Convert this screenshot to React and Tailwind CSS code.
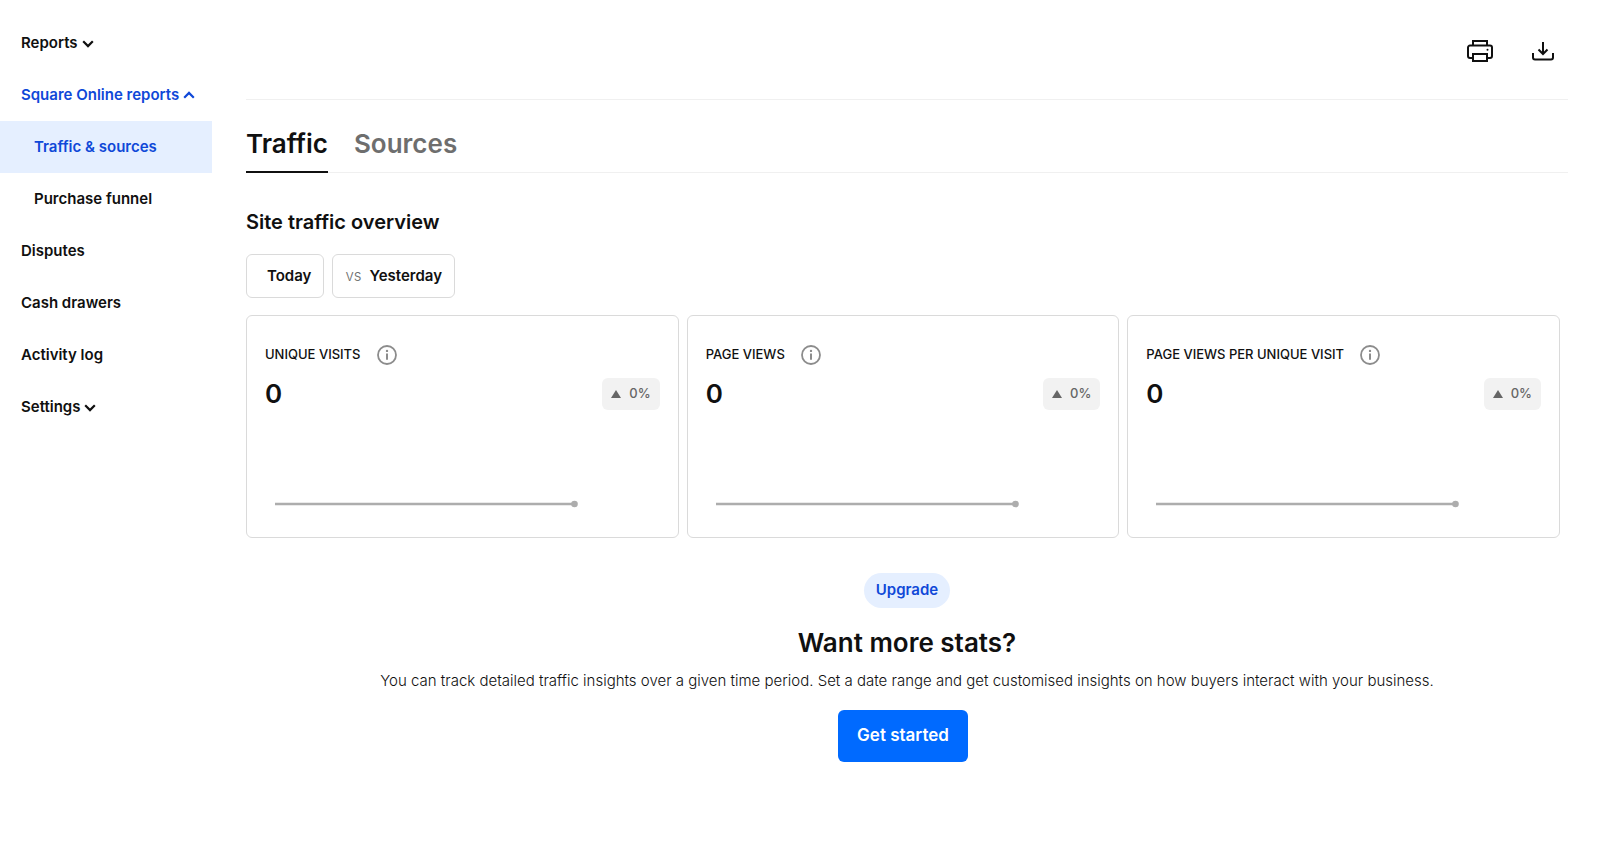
import { useState } from "react";

const stats = [
  { label: "UNIQUE VISITS", value: 0, change: "0%" },
  { label: "PAGE VIEWS", value: 0, change: "0%" },
  { label: "PAGE VIEWS PER UNIQUE VISIT", value: 0, change: "0%" },
];

const Chevron = ({ up }) => (
  <svg className="w-3 h-3" viewBox="0 0 12 12" fill="none" stroke="currentColor" strokeWidth="2.2">
    <path d={up ? "M1.2 8.7 6 3.9l4.800 4.800" : "M1.2 4.3 6 9.100l4.800-4.800"} />
  </svg>
);

const PrintIcon = () => (
  <svg className="w-7 h-6" viewBox="0 0 28 24" fill="none" stroke="currentColor" strokeWidth="2">
    <path d="M7 6.5V2h14v4.500" />
    <path d="M7 19H4a2 2 0 0 1-2-2V8.500a2 2 0 0 1 2-2h20a2 2 0 0 1 2 2V17a2 2 0 0 1-2 2h-3" />
    <path d="M7 15h14v7H7z" />
    <circle cx="21.500" cy="10.800" r="1" fill="currentColor" stroke="none" />
  </svg>
);

const DownloadIcon = () => (
  <svg className="w-6 h-6" viewBox="0 0 24 24" fill="none" stroke="currentColor" strokeWidth="2">
    <path d="M12 3v12M7.500 10.500l4.500 4.500 4.500-4.500" />
    <path d="M2 14v4.500a2 2 0 0 0 2 2h16a2 2 0 0 0 2-2V14" />
  </svg>
);

const InfoIcon = () => (
  <svg className="w-5 h-5" viewBox="0 0 20 20" fill="none" stroke="currentColor">
    <circle cx="10" cy="10" r="9" strokeWidth="1.800" />
    <path d="M10 8.500v6.300" strokeWidth="2" />
    <circle cx="10" cy="5.900" r="1.200" fill="currentColor" stroke="none" />
  </svg>
);

const NavItem = ({ label, chevron, sub, active, open }) => (
  <li>
    <a
      href="#"
      className={`flex h-13 items-center gap-1 text-[15px] font-semibold ${sub ? "pl-[34px]" : "pl-[21px]"} ${
        active ? "bg-[#e5efff]" : ""
      } ${active || open ? "text-[#0f48d8]" : ""}`}
    >
      {label}
      {chevron && <Chevron up={open} />}
    </a>
  </li>
);

const StatCard = ({ label, value, change }) => (
  <article className="h-[223px] rounded-md border border-[#dadada] px-[18px] pt-[29px]">
    <div className="flex items-center gap-4">
      <h3 className="text-[13px] font-medium">{label}</h3>
      <button type="button" aria-label={`About ${label}`} className="text-[#8c8c8c]">
        <InfoIcon />
      </button>
    </div>
    <div className="mt-[13px] flex items-center justify-between">
      <span className="text-[26px] leading-8 font-semibold">{value}</span>
      <span className="flex h-8 items-center gap-2 rounded-md bg-[#f2f2f2] px-[9px] text-[13px] font-medium text-[#666]">
        <svg className="w-[10px] h-2" viewBox="0 0 10 8" fill="currentColor">
          <path d="M5 0l5 8H0z" />
        </svg>
        {change}
      </span>
    </div>
    {/* Sparkline */}
    <svg className="mt-[90px] ml-[10px] h-2 w-[304px]" viewBox="0 0 304 8">
      <path d="M0 4h299" stroke="#adadad" strokeWidth="2.400" />
      <circle cx="299.500" cy="4" r="3.300" fill="#adadad" />
    </svg>
  </article>
);

const App = () => {
  const [tab, setTab] = useState("Traffic");

  return (
    <div className="flex min-h-screen bg-white font-['Inter',sans-serif] text-[#101010]">
      <nav className="w-[212px] shrink-0 pt-[17px]">
        <ul>
          <NavItem label="Reports" chevron />
          <NavItem label="Square Online reports" chevron open />
          <NavItem label="Traffic & sources" sub active />
          <NavItem label="Purchase funnel" sub />
          <NavItem label="Disputes" />
          <NavItem label="Cash drawers" />
          <NavItem label="Activity log" />
          <NavItem label="Settings" chevron />
        </ul>
      </nav>

      <main className="min-w-0 flex-1 pl-[34px] pr-8">
        <header className="flex h-[100px] items-center justify-end gap-[37px] border-b border-[#f0f0f0] pt-[2px] pr-[13px]">
          <button type="button" aria-label="Print">
            <PrintIcon />
          </button>
          <button type="button" aria-label="Download">
            <DownloadIcon />
          </button>
        </header>

        <div className="flex h-[73px] gap-[26px] border-b border-[#f0f0f0]">
          {["Traffic", "Sources"].map((name) => (
            <button
              key={name}
              type="button"
              onClick={() => setTab(name)}
              className={`-mb-px border-b-2 pt-4 text-[26px] font-semibold ${
                tab === name ? "border-[#101010]" : "border-transparent text-[#6e6e6e]"
              }`}
            >
              {name}
            </button>
          ))}
        </div>

        <section className="pr-2">
          <h2 className="mt-[33px] text-xl leading-8 font-semibold">Site traffic overview</h2>
          <div className="mt-4 flex gap-2">
            <button type="button" className="h-11 rounded-md border border-[#dadada] pl-5 pr-3 text-[15px] font-semibold">
              Today
            </button>
            <button type="button" className="flex h-11 items-center gap-2 rounded-md border border-[#dadada] px-3 text-[15px] font-semibold">
              <span className="font-light text-[#6e6e6e]">vs</span>
              Yesterday
            </button>
          </div>
          <div className="mt-[17px] grid grid-cols-3 gap-2">
            {stats.map((s) => (
              <StatCard key={s.label} {...s} />
            ))}
          </div>
        </section>

        <section className="flex flex-col items-center pt-[35px] pb-8 text-center">
          <span className="flex h-[35px] items-center rounded-full bg-[#e5efff] px-3 text-[15px] font-semibold text-[#0f48d8]">
            Upgrade
          </span>
          <h2 className="mt-[19px] text-[26px] leading-8 font-semibold">Want more stats?</h2>
          <p className="mt-[10px] text-[15px] leading-6 font-light">
            You can track detailed traffic insights over a given time period. Set a date range and get customised
            insights on how buyers interact with your business.
          </p>
          <div className="pr-2">
            <button type="button" className="mt-[17px] h-13 rounded-md bg-[#006aff] px-[19px] text-[17px] font-semibold text-white">
              Get started
            </button>
          </div>
        </section>
      </main>
    </div>
  );
};

export default App;
